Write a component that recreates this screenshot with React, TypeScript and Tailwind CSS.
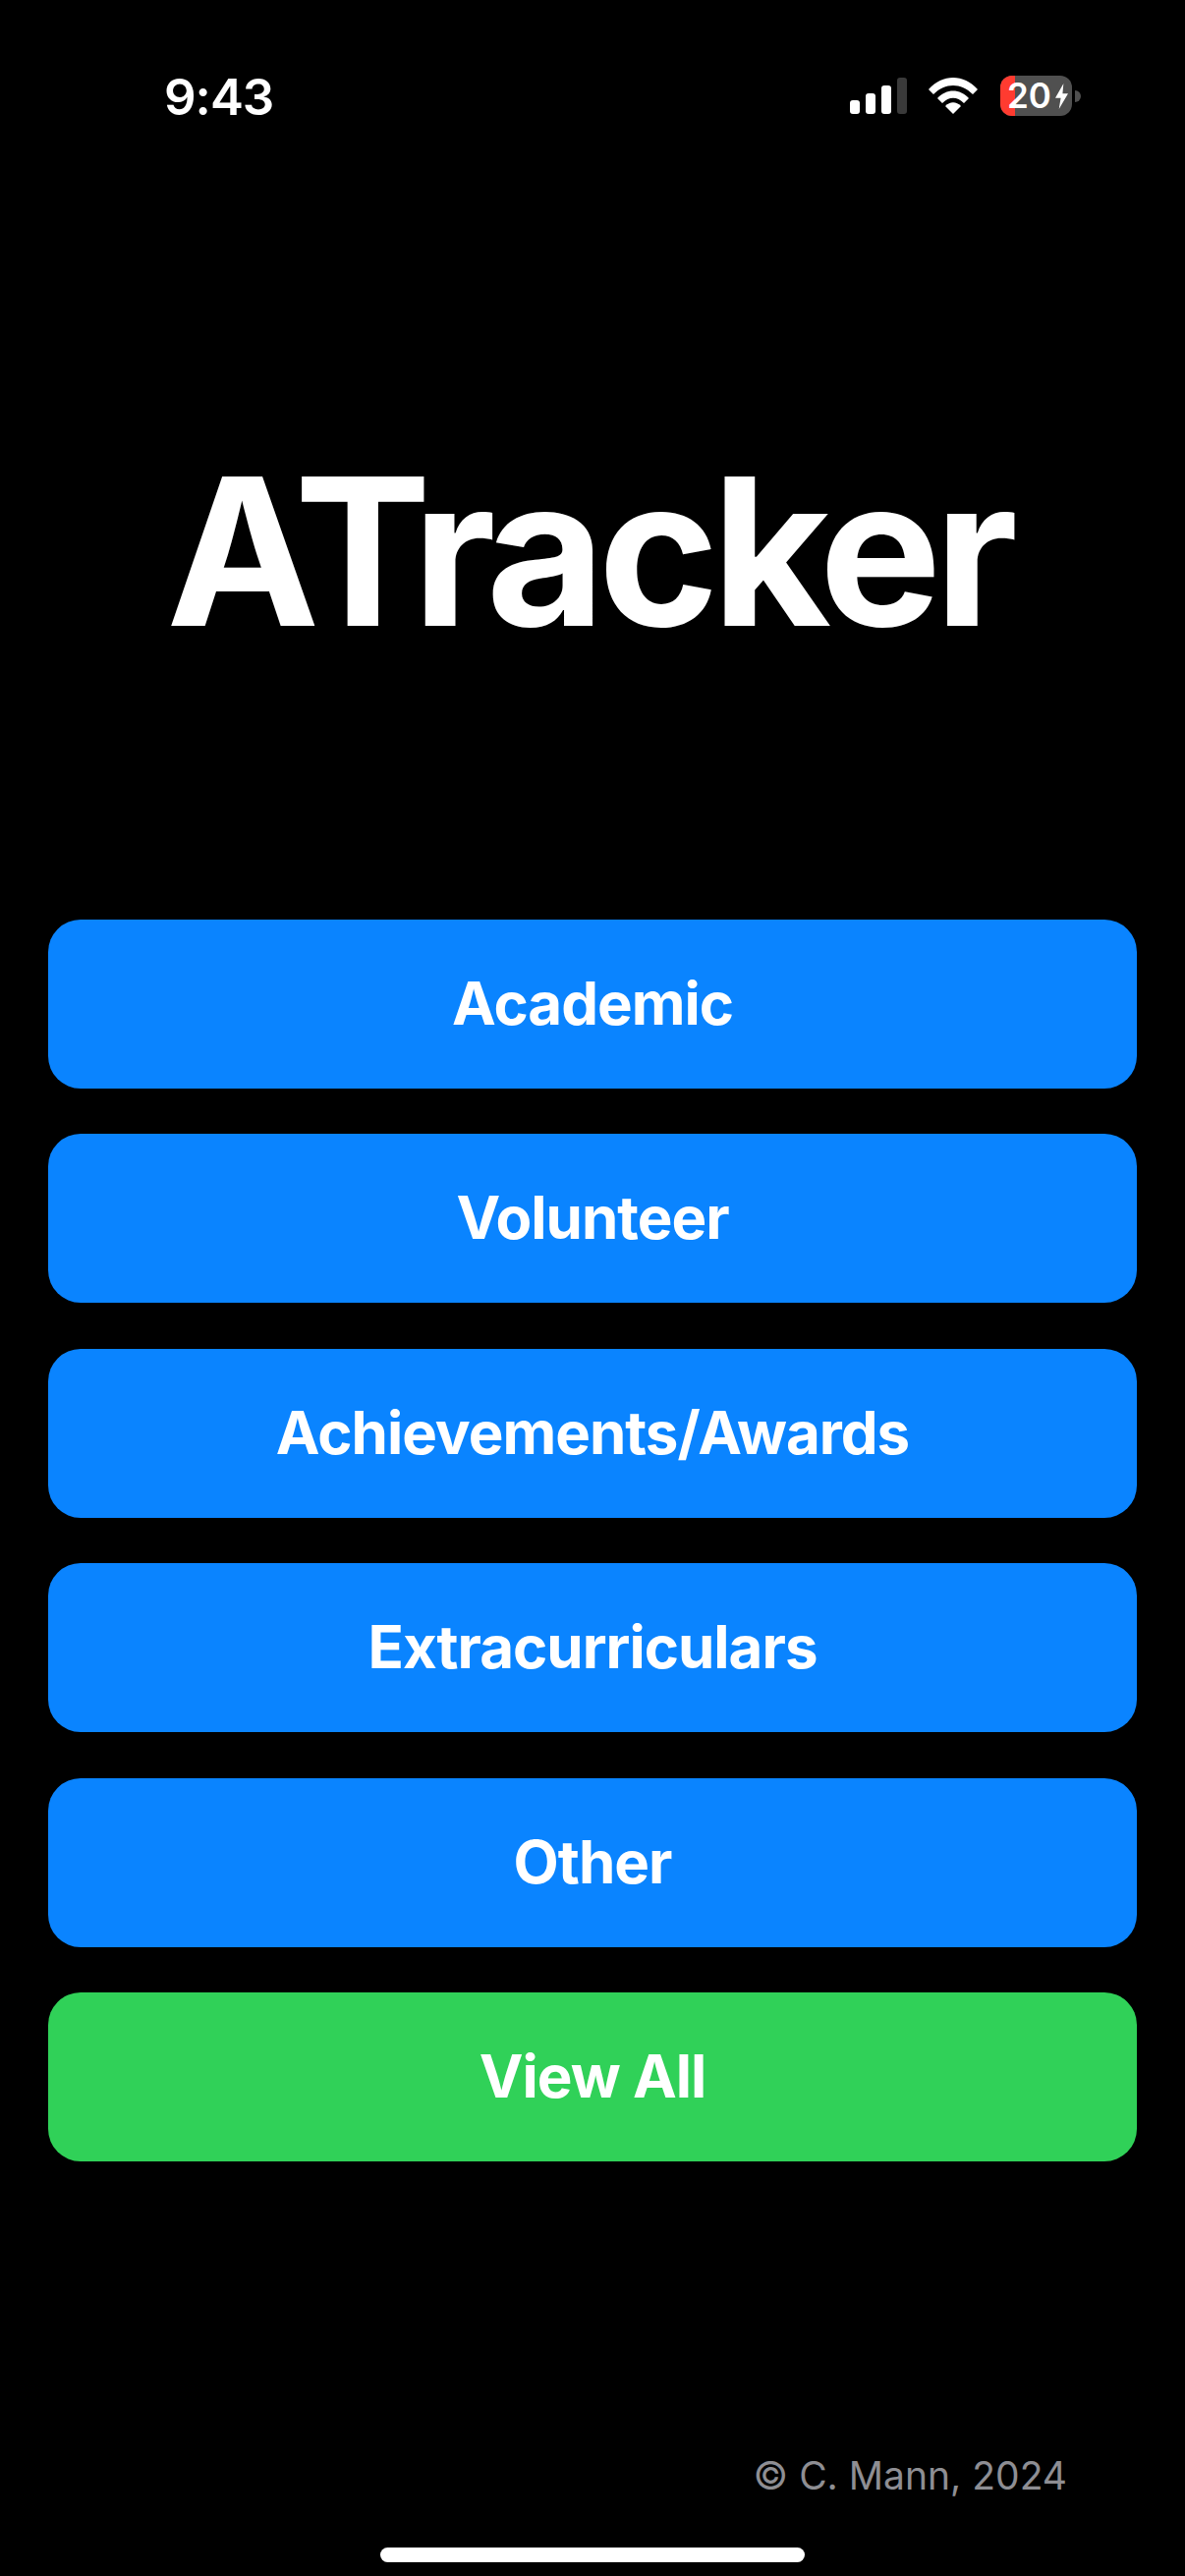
const CATEGORIES = ["Academic", "Volunteer", "Achievements/Awards", "Extracurriculars", "Other"];

function CategoryButton({ label, color }: { label: string; color: string }) {
  return (
    <button
      type="button"
      className={`flex h-[172px] w-full items-center justify-center rounded-[33px] pb-[2px] text-[60px] font-bold leading-none tracking-[-1px] text-white ${color}`}
    >
      {label}
    </button>
  );
}

function StatusBar() {
  return (
    <div className="flex h-[196px] items-start justify-between pl-[167px] pr-[106px] pt-[72px]">
      <span className="text-[51px] font-semibold leading-[54px] tracking-[-1px] text-white">9:43</span>
      <div className="mt-[5px] flex items-center">
        <svg width="58" height="37" viewBox="0 0 58 37">
          <rect x="0" y="23" width="10" height="14" rx="3" fill="#fff" />
          <rect x="16" y="16" width="10" height="21" rx="3" fill="#fff" />
          <rect x="32" y="8" width="10" height="29" rx="3" fill="#fff" />
          <rect x="48" y="0" width="10" height="37" rx="3" fill="#3a3a3a" />
        </svg>
        <svg className="ml-[22px]" width="50" height="37" viewBox="0 0 50 37">
          <path d="M0 12 C14 -4 36 -4 50 12 L45 17 C33 5 17 5 5 17 Z" fill="#fff" />
          <path d="M9 21 C18 11 32 11 41 21 L36 26 C29 19 21 19 14 26 Z" fill="#fff" />
          <path d="M17 29 C22 24 28 24 33 29 L25 37 Z" fill="#fff" />
        </svg>
        <div className="relative ml-[23px] flex h-[41px] w-[73px] items-center overflow-hidden rounded-[12px] bg-[#505050]">
          <div className="h-full w-[15px] bg-[#ff3b30]" />
          <div className="absolute inset-0 flex items-center pl-[7px]">
            <span className="text-[35px] font-semibold leading-none text-white">20</span>
            <svg className="ml-[4px]" width="13" height="26" viewBox="0 0 14 28">
              <path d="M9 0 L0 16 H6 L4 28 L14 11 H8 Z" fill="#fff" />
            </svg>
          </div>
        </div>
        <div className="ml-[3px] h-[12px] w-[6px] rounded-r-full bg-[#505050]" />
      </div>
    </div>
  );
}

export default function App() {
  return (
    <div
      className="relative flex h-[2622px] w-[1206px] flex-col overflow-hidden bg-black"
      style={{ fontFamily: "Inter, sans-serif" }}
    >
      <StatusBar />
      <h1 className="mt-[257px] pr-[8px] text-center text-[209px] font-bold leading-[216px] tracking-[-7.3px] text-white">
        ATracker
      </h1>
      <div className="mt-[267px] flex flex-col gap-[46.4px] px-[49px]">
        {CATEGORIES.map((label) => (
          <CategoryButton key={label} label={label} color="bg-[#0a84ff]" />
        ))}
        <CategoryButton label="View All" color="bg-[#30d158]" />
      </div>
      <div className="mt-[298px] pr-[120px] text-right text-[39px] leading-[44px] text-[#8e8e93]">
        © C. Mann, 2024
      </div>
      <div className="absolute bottom-[14px] left-[387px] h-[15px] w-[432px] rounded-full bg-white" />
    </div>
  );
}
